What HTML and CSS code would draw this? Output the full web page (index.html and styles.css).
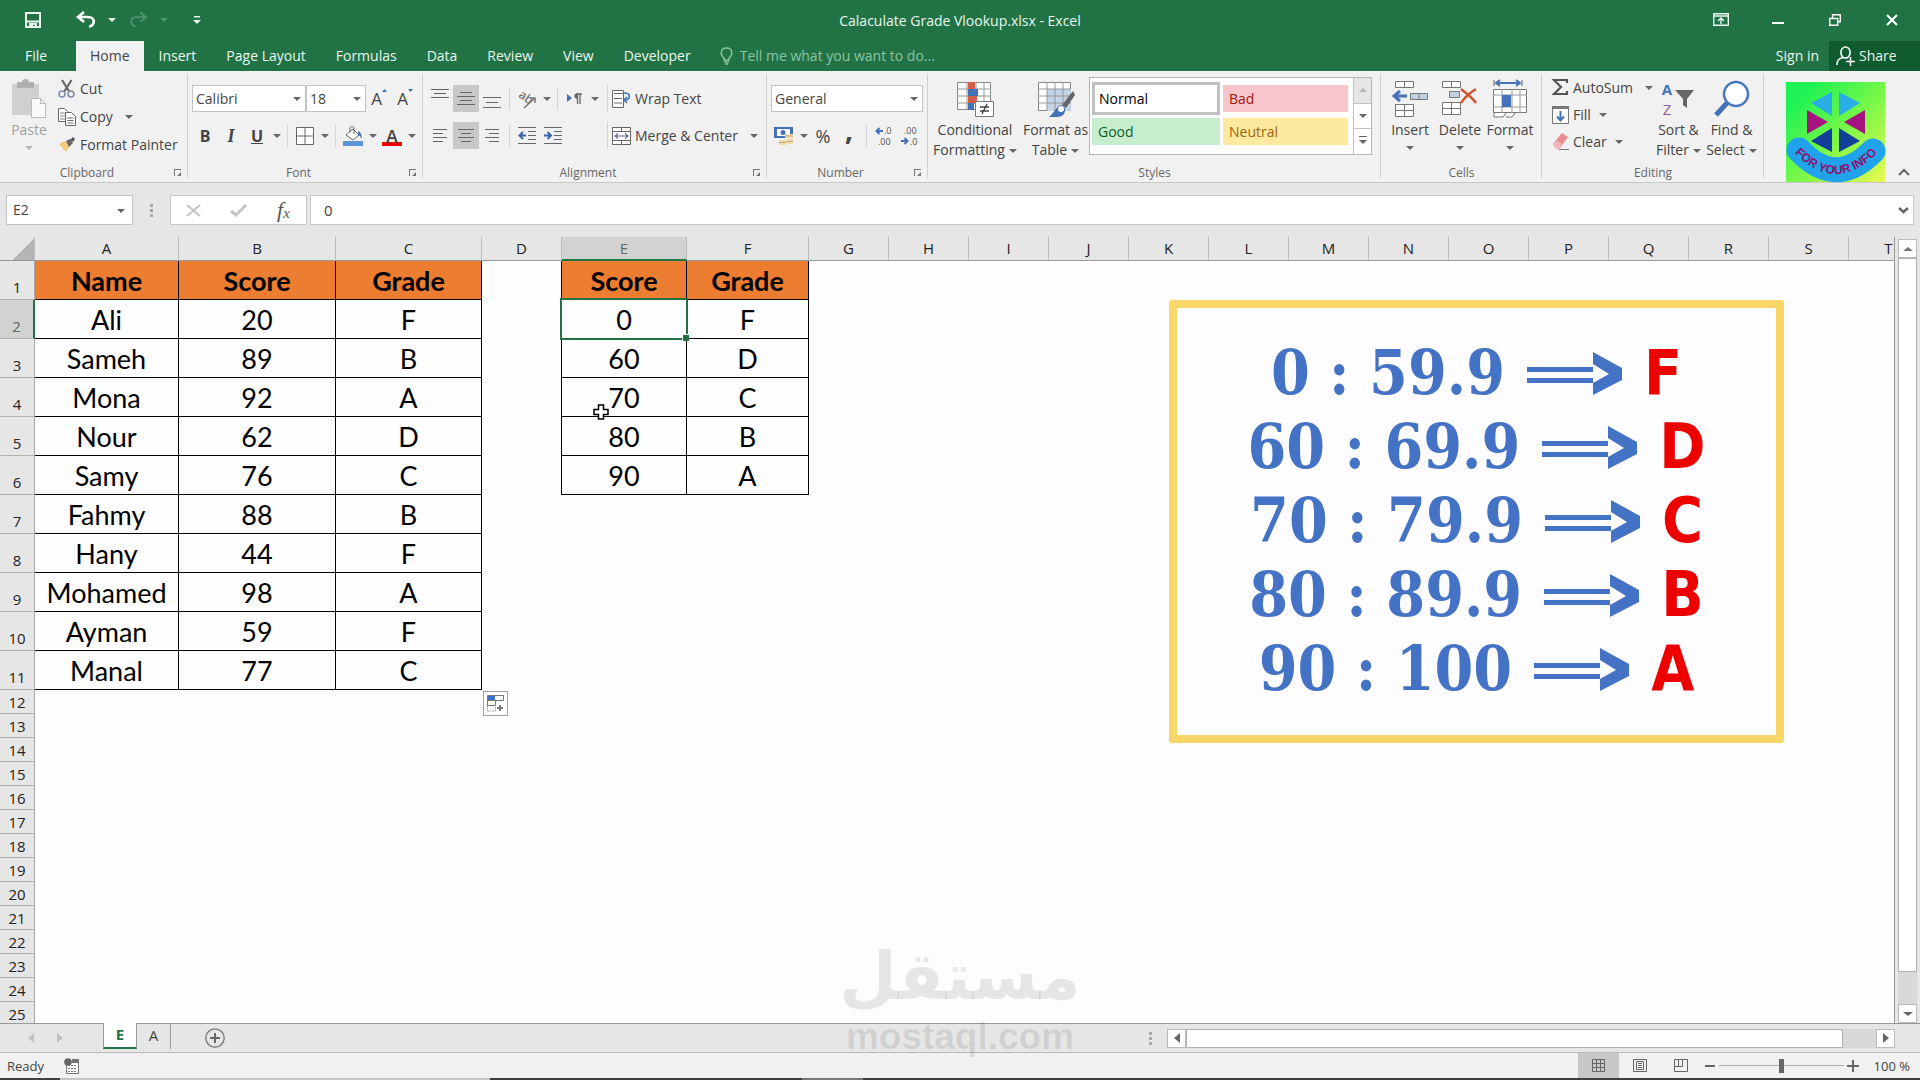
FILE: index.html
```html
<!DOCTYPE html>
<html lang="en">
<head>
    <meta charset="UTF-8">
    <meta name="viewport" content="width=device-width, initial-scale=1.0">
    <title>Calaculate Grade Vlookup.xlsx - Excel</title>
    <link rel="stylesheet" href="styles.css">
</head>
<body>
    <!-- Title bar -->
    <header class="title-bar">
        <div class="quick-access">
            <button class="qa-save" aria-label="Save"><svg width="16" height="16" viewBox="0 0 16 16"><path d="M1 1h14v14H1z M1 9.500h14" fill="none" stroke="#e9f7ee" stroke-width="2"/><path d="M4 11h8v5h-2v-3H8v3H4z" fill="#e9f7ee"/></svg></button>
            <button class="qa-undo" aria-label="Undo"><svg width="19" height="16" viewBox="0 0 19 16"><path d="M3 5h8c8 0 7 9 1 9.500" fill="none" stroke="#fff" stroke-width="2.600"/><path d="M7 0L1 5l6 5" fill="none" stroke="#fff" stroke-width="2.600"/></svg></button>
            <button class="qa-caret" aria-label="Undo list"><i class="caret light"></i></button>
            <button class="qa-undo" aria-label="Redo"><svg width="18" height="16" viewBox="0 0 19 16"><path d="M16 5H8C0 5 1 14 7 14.500M12 0l6 5-6 5" fill="none" stroke="#4f9470" stroke-width="2"/></svg></button>
            <button class="qa-caret" aria-label="Redo list"><i class="caret dim"></i></button>
            <button class="qa-more" aria-label="Customize Quick Access Toolbar"><svg width="8" height="8" viewBox="0 0 8 8"><path d="M1 0h6v1.500H1zM0 4h8L4 8z" fill="#e9f7ee"/></svg></button>
        </div>
        <h1>Calaculate Grade Vlookup.xlsx - Excel</h1>
        <div class="window-buttons">
            <button aria-label="Ribbon display options"><svg width="16" height="13" viewBox="0 0 16 13"><path d="M.7.7h14.600v11.600H.7zM1 3h14M8 11V5M5 8l3-3 3 3" fill="none" stroke="#e9f7ee" stroke-width="1.400"/></svg></button>
            <button aria-label="Minimize"><svg width="12" height="12" viewBox="0 0 12 12"><path d="M0 8h12v2H0z" fill="#fff"/></svg></button>
            <button aria-label="Restore"><svg width="12" height="12" viewBox="0 0 12 12"><path d="M.7 4.500h8v6.800h-8zM3.500 4V.7h7.800v7H9" fill="none" stroke="#fff" stroke-width="1.400"/></svg></button>
            <button aria-label="Close"><svg width="12" height="12" viewBox="0 0 12 12"><path d="M1 1l10 10M11 1L1 11" stroke="#fff" stroke-width="2"/></svg></button>
        </div>
    </header>

    <!-- Ribbon tabs -->
    <nav class="tabs">
        <button class="tab file">File</button>
        <button class="tab active">Home</button>
        <button class="tab">Insert</button>
        <button class="tab">Page Layout</button>
        <button class="tab">Formulas</button>
        <button class="tab">Data</button>
        <button class="tab">Review</button>
        <button class="tab">View</button>
        <button class="tab">Developer</button>
        <button class="tell-me"><svg width="13" height="18" viewBox="0 0 13 18"><path d="M4 13v-2C0 8 0 1 6.500 1S13 8 9 11v2zM4 15h5M5 17h3" fill="none" stroke="#8cc4a2" stroke-width="1.500"/></svg>Tell me what you want to do...</button>
        <button class="sign-in">Sign in</button>
        <button class="share"><svg width="20" height="20" viewBox="0 0 20 20"><path d="M1 19c0-5 3-7 6-7.500" fill="none" stroke="#fff" stroke-width="1.600"/><ellipse cx="9.500" cy="6.500" rx="4.600" ry="5.500" fill="none" stroke="#fff" stroke-width="1.600"/><path d="M10 15.500h9M14.500 11v9" stroke="#fff" stroke-width="1.500"/></svg>Share</button>
    </nav>

    <!-- Ribbon -->
    <section class="ribbon">
        <div class="group clipboard">
            <div class="group-body">
                <button class="big paste"><svg width="36" height="40" viewBox="0 0 36 40"><path d="M1 5h27v31H1z" fill="#d0d0d0"/><path d="M6 3h5c0-4 7-4 7 0h5v6H6z" fill="#b0b0b0"/><path d="M20.500 19.500h9l5 5v14h-14z" fill="#fafafa" stroke="#bbb"/><path d="M29.500 19.500v5h5" fill="none" stroke="#bbb"/></svg><span>Paste</span><i class="caret"></i></button>
                <div class="stack">
                    <button><svg width="18" height="18" viewBox="0 0 18 18"><path d="M4 0l7.500 12M13.500 0L6 12" stroke="#666" stroke-width="2.200"/><circle cx="4" cy="14" r="3" fill="none" stroke="#7d8ea5" stroke-width="1.500"/><circle cx="13" cy="14" r="3" fill="none" stroke="#7d8ea5" stroke-width="1.500"/></svg>Cut</button>
                    <button><svg width="18" height="18" viewBox="0 0 18 18"><path d="M.5.500h6l3 3v10h-9z" fill="#fff" stroke="#666"/><path d="M2 5h5M2 8h5M2 11h5" stroke="#888"/><path d="M7.500 4.500h6l4 4v9h-10z" fill="#fff" stroke="#666"/><path d="M9.500 10h6M9.500 12.500h6M9.500 15h6" stroke="#666"/></svg>Copy<i class="caret far"></i></button>
                    <button><svg width="18" height="16" viewBox="0 0 18 16"><path d="M1 7l6-3 5 5-4 6z" fill="#f2ca7b"/><path d="M8 4l4-2 3 4-4 4z" fill="#666"/><path d="M12 3l3-3 2 2-2 3z" fill="#555"/></svg>Format Painter</button>
                </div>
            </div>
            <div class="group-label"><span>Clipboard</span><button class="launcher" aria-label="Clipboard settings"></button></div>
        </div>

        <div class="group font">
            <div class="group-body rows">
                <div class="row">
                    <span class="select family"><select aria-label="Font"><option>Calibri</option></select></span>
                    <span class="select size"><select aria-label="Font size"><option>18</option></select></span>
                    <button class="icon-btn grow" aria-label="Increase font size">A<svg width="5" height="3" viewBox="0 0 5 3"><path d="M0 3l2.500-3L5 3z" fill="#4472b8"/></svg></button>
                    <button class="icon-btn grow" aria-label="Decrease font size">A<svg width="5" height="3" viewBox="0 0 5 3"><path d="M0 0h5L2.500 3z" fill="#4472b8"/></svg></button>
                </div>
                <div class="row">
                    <button class="icon-btn bold">B</button>
                    <button class="icon-btn italic">I</button>
                    <button class="icon-btn underline">U</button>
                    <button class="caret-btn" aria-label="Underline options"><i class="caret"></i></button>
                    <i class="sep"></i>
                    <button class="icon-btn" aria-label="Borders"><svg width="18" height="18" viewBox="0 0 18 18"><path d="M.5.500h17v17H.5zM9 1v16M1 9h16" fill="#fff" stroke="#666"/></svg></button>
                    <button class="caret-btn" aria-label="Border options"><i class="caret"></i></button>
                    <i class="sep"></i>
                    <button class="icon-btn" aria-label="Fill color"><svg width="20" height="20" viewBox="0 0 20 20"><path d="M0 15h20v5H0z" fill="#5b94d8"/><path d="M3 9l7-6 6 6-6 5z" fill="#fff" stroke="#666"/><path d="M7 6V2c0-2 4-2 4 0v6" fill="none" stroke="#666"/><path d="M15 5c3 1 4 4 3.500 8-1-2-1-3-3-4z" fill="#4472b8"/></svg></button>
                    <button class="caret-btn" aria-label="Fill color options"><i class="caret"></i></button>
                    <button class="icon-btn font-color" aria-label="Font color">A</button>
                    <button class="caret-btn" aria-label="Font color options"><i class="caret"></i></button>
                </div>
            </div>
            <div class="group-label"><span>Font</span><button class="launcher" aria-label="Font settings"></button></div>
        </div>

        <div class="group alignment">
            <div class="group-body">
                <div class="rows align-icons">
                    <div class="row">
                        <button class="icon-btn" aria-label="Top align"><svg class="up" width="18" height="9" viewBox="0 0 18 9"><path d="M0 .5h18M3 4.500h12M0 8.500h18" stroke="#666"/></svg></button>
                        <button class="icon-btn on" aria-label="Middle align"><svg width="18" height="13" viewBox="0 0 18 13"><path d="M3 .5h12M0 4.500h18M3 8.500h12M0 12.500h18" stroke="#666"/></svg></button>
                        <button class="icon-btn" aria-label="Bottom align"><svg class="down" width="18" height="11" viewBox="0 0 18 11"><path d="M0 .5h18M3 5.500h12M0 10.500h18" stroke="#666"/></svg></button>
                        <i class="sep"></i>
                        <button class="icon-btn" aria-label="Orientation"><svg width="20" height="20" viewBox="0 0 20 20"><text x="1" y="12" font-size="12" transform="rotate(35 8 10)">ab</text><path d="M7 19L18 9M13 9h5v5" fill="none" stroke="#777" stroke-width="1.500"/></svg></button>
                        <button class="caret-btn" aria-label="Orientation options"><i class="caret"></i></button>
                        <i class="sep"></i>
                        <button class="icon-btn" aria-label="Text direction"><svg width="16" height="12" viewBox="0 0 16 12"><path d="M0 1l5 4-5 4z" fill="#4472b8"/><path d="M15 1h-4.500v10M13 1v10" fill="none" stroke="#666" stroke-width="1.300"/><path d="M11 0c-5 0-5 6 0 6z" fill="#666"/></svg></button>
                        <button class="caret-btn" aria-label="Text direction options"><i class="caret"></i></button>
                    </div>
                    <div class="row">
                        <button class="icon-btn" aria-label="Align left"><svg width="14" height="13" viewBox="0 0 14 13"><path d="M0 .5h14M0 4.500h10M0 8.500h14M0 12.500h10" stroke="#666"/></svg></button>
                        <button class="icon-btn on" aria-label="Center"><svg width="16" height="13" viewBox="0 0 16 13"><path d="M0 .5h16M3 4.500h10M0 8.500h16M3 12.500h10" stroke="#666"/></svg></button>
                        <button class="icon-btn" aria-label="Align right"><svg width="14" height="13" viewBox="0 0 14 13"><path d="M0 .5h14M4 4.500h10M0 8.500h14M4 12.500h10" stroke="#666"/></svg></button>
                        <i class="sep"></i>
                        <button class="icon-btn" aria-label="Decrease indent"><svg width="18" height="17" viewBox="0 0 18 17"><path d="M0 .5h18M10 4.500h8M10 8.500h8M10 12.500h8M0 16.500h18" stroke="#666"/><path d="M8 8.500H2M5 5L1.500 8.500 5 12" fill="none" stroke="#3a62ad" stroke-width="2"/></svg></button>
                        <button class="icon-btn" aria-label="Increase indent"><svg width="18" height="17" viewBox="0 0 18 17"><path d="M0 .5h18M10 4.500h8M10 8.500h8M10 12.500h8M0 16.500h18" stroke="#666"/><path d="M0 8.500h6M3.500 5L7 8.500 3.500 12" fill="none" stroke="#3a62ad" stroke-width="2"/></svg></button>
                    </div>
                </div>
                <div class="rows align-text">
                    <div class="row"><button class="text-btn"><svg width="19" height="18" viewBox="0 0 19 18"><path d="M.5.500h11v17H.5zM12 3.500H2M2 8.500h8M2 13h8" fill="#fff" stroke="#666"/><path d="M11 3h3c5 1 4 7-1 7M15 7l-3 3 3 3" fill="none" stroke="#4472b8" stroke-width="1.600"/></svg>Wrap Text</button></div>
                    <div class="row"><button class="text-btn"><svg width="19" height="18" viewBox="0 0 19 18"><path d="M.5.500h18v17H.5zM.5 4.500h18M.5 13.500h18M9.500.500v4M9.500 13.500v4" fill="#fff" stroke="#666"/><path d="M3 9h13M6 6.500L3 9l3 2.500M13 6.500L16 9l-3 2.500" fill="none" stroke="#5f6f8a" stroke-width="1.200"/></svg>Merge &amp; Center<i class="caret far"></i></button></div>
                </div>
            </div>
            <div class="group-label"><span>Alignment</span><button class="launcher" aria-label="Alignment settings"></button></div>
        </div>

        <div class="group number">
            <div class="group-body rows">
                <div class="row"><span class="select format"><select aria-label="Number format"><option>General</option></select></span></div>
                <div class="row">
                    <button class="icon-btn" aria-label="Accounting format"><svg width="20" height="20" viewBox="0 0 20 20"><path d="M0 1h19v11H0z" fill="#4472b8"/><path d="M3 3h13v7H3z" fill="#fff"/><circle cx="9" cy="6.500" r="2.500" fill="#4472b8"/><path d="M11 8h8v4h-8zM5 14h7v5H5zM12 13h7v5h-7z" fill="#f0dba8"/><path d="M11 10h8M5 16.500h7M12 15.500h7" stroke="#c3ac78"/></svg></button>
                    <button class="caret-btn" aria-label="Accounting options"><i class="caret"></i></button>
                    <button class="icon-btn percent">%</button>
                    <button class="icon-btn comma">,</button>
                    <i class="sep"></i>
                    <button class="icon-btn" aria-label="Increase decimal"><svg width="18" height="24" viewBox="0 0 18 24"><path d="M8 7H2M4.500 4L1.500 7l3 3" fill="none" stroke="#4472b8" stroke-width="2"/><text x="9" y="10" font-size="9">.0</text><text x="3" y="21" font-size="9">.00</text></svg></button>
                    <button class="icon-btn" aria-label="Decrease decimal"><svg width="18" height="24" viewBox="0 0 18 24"><text x="3" y="10" font-size="9">.00</text><path d="M0 17h6M3.500 14l3 3-3 3" fill="none" stroke="#4472b8" stroke-width="2"/><text x="9" y="21" font-size="9">.0</text></svg></button>
                </div>
            </div>
            <div class="group-label"><span>Number</span><button class="launcher" aria-label="Number settings"></button></div>
        </div>

        <div class="group styles">
            <div class="group-body">
                <button class="big cond"><svg width="38" height="36" viewBox="0 0 38 36"><path d="M1.500 1.500h33v27h-33z" fill="#fff" stroke="#888"/><path d="M1 8h34M1 15h34M1 22h34M11 1v28M20 1v28M28 1v28" stroke="#999"/><path d="M12 1h7v7h-7zM12 15h9v7h-9z" fill="#d0604a"/><path d="M12 8h10v7H12zM12 22h6v7h-6z" fill="#4472b8"/><path d="M19.500 20.500h18v15h-18z" fill="#fff" stroke="#777"/><path d="M24 26h9M24 30h9M31 23l-5 10" stroke="#444" stroke-width="1.400"/></svg><span>Conditional</span><span>Formatting<i class="caret near"></i></span></button>
                <button class="big fmt-table"><svg width="38" height="36" viewBox="0 0 38 36"><path d="M1.500 1.500h32v28h-32z" fill="#fff" stroke="#888"/><path d="M10 8h24v22H10z" fill="#c3d3e8"/><path d="M1 8h33M1 15h33M1 22h33M10 1v29M18 1v29M26 1v29" stroke="#999"/><path d="M36 10L25 24l4 3 9-13z" fill="#666"/><path d="M25 24c-5 0-6 6-13 12h8c6 0 9-4 8-9z" fill="#4472b8"/><circle cx="24" cy="28" r="3" fill="#fff"/></svg><span>Format as</span><span>Table<i class="caret near"></i></span></button>
                <div class="gallery">
                    <div class="swatches">
                        <button class="normal">Normal</button>
                        <button class="bad">Bad</button>
                        <button class="good">Good</button>
                        <button class="neutral">Neutral</button>
                    </div>
                    <div class="gallery-nav">
                        <button class="off" aria-label="Previous styles"><i class="caret rise pale"></i></button>
                        <button aria-label="Next styles"><i class="caret"></i></button>
                        <button aria-label="More styles"><i class="caret bar"></i></button>
                    </div>
                </div>
            </div>
            <div class="group-label"><span>Styles</span></div>
        </div>

        <div class="group cells">
            <div class="group-body">
                <button class="big"><svg width="36" height="36" viewBox="0 0 36 36"><path d="M3.500.500h18v6h-18zM12.500.500v6M3.500 23.500h18v12h-18zM3.500 29.500h18M12.500 23.500v12" fill="#fff" stroke="#777"/><path d="M18.500 12.500h17v6h-17zM27 12.500v6" fill="#c3d0de" stroke="#777"/><path d="M15 15H3M8 10l-6 5 6 5" fill="none" stroke="#4472b8" stroke-width="3"/></svg><span>Insert</span><i class="caret"></i></button>
                <button class="big"><svg width="36" height="36" viewBox="0 0 36 36"><path d="M.5.500h18v6H.5zM9.500.500v6M.5 21.500h18v12H.5zM.5 27.500h18M9.500 21.500v12" fill="#fff" stroke="#777"/><path d="M7.500 10.500h10v6h-10z" fill="#c3d0de" stroke="#777"/><path d="M19 8c4 3 11 8 15 14M34 8c-5 3-11 8-15 14" fill="none" stroke="#d0522f" stroke-width="2.500"/></svg><span>Delete</span><i class="caret"></i></button>
                <button class="big"><svg width="36" height="38" viewBox="0 0 36 38"><path d="M2 0v6M30 0v6" stroke="#666"/><path d="M5 3h22M8 0L4 3l4 3M24 0l4 3-4 3" fill="none" stroke="#4472b8" stroke-width="2"/><path d="M1.500 9.500h33v23h-33z" fill="#fff" stroke="#777"/><path d="M1 15h34M1 27h34M10 9v24M20 9v24M28 9v24" stroke="#999"/><path d="M10 15h9v12h-9z" fill="#4472b8"/><path d="M2 33v4h9l3-4M14 37h6l3-4" fill="#fff" stroke="#777"/></svg><span>Format</span><i class="caret"></i></button>
            </div>
            <div class="group-label"><span>Cells</span></div>
        </div>

        <div class="group editing">
            <div class="group-body">
                <div class="stack">
                    <button><svg width="17" height="17" viewBox="0 0 17 17"><path d="M15 4V1H2l7 7-7 7h13v-3" fill="none" stroke="#555" stroke-width="2.200"/></svg>AutoSum<i class="caret far"></i></button>
                    <button><svg width="17" height="18" viewBox="0 0 17 18"><path d="M.5.500h16v17H.5z" fill="#fff" stroke="#777"/><path d="M0 0h17v3H0z" fill="#777"/><path d="M8.500 5v9M5 10.500l3.500 4 3.500-4" fill="none" stroke="#4472b8" stroke-width="2"/></svg>Fill<i class="caret near"></i></button>
                    <button><svg width="17" height="17" viewBox="0 0 17 17"><path d="M1 11L10 0l6 4-8 11H4z" fill="#e88b90"/><path d="M4 7l6 4-3 5H4l-3-4z" fill="#f4b6b8"/><path d="M7 16.500h10" stroke="#777"/></svg>Clear<i class="caret near"></i></button>
                </div>
                <button class="big find">
                    <span class="sort-icon"><span class="az"><b>A</b><b>Z</b></span><svg width="20" height="19" viewBox="0 0 20 19"><path d="M0 0h19l-7 9v9l-4-3V9z" fill="#666"/></svg></span>
                    <span>Sort &amp;</span><span>Filter<i class="caret near"></i></span>
                </button>
                <button class="big find"><svg width="36" height="36" viewBox="0 0 36 36"><path d="M13 22L2 34" stroke="#4472b8" stroke-width="5"/><circle cx="22" cy="13" r="12" fill="#fff" stroke="#4b78bd" stroke-width="2.500"/></svg><span>Find &amp;</span><span>Select<i class="caret near"></i></span></button>
            </div>
            <div class="group-label"><span>Editing</span></div>
        </div>

        <div class="brand">
            <svg width="99" height="100" viewBox="0 0 99 100" role="img" aria-label="For your info">
                <defs>
                    <linearGradient id="lime" x1="0" y1="0" x2="1" y2="1">
                        <stop offset="0.15" stop-color="#1ff254"/>
                        <stop offset="0.55" stop-color="#7cf848"/>
                        <stop offset="1" stop-color="#e9fa50"/>
                    </linearGradient>
                    <path id="arc" d="M5 67Q50 117 95 67"/>
                </defs>
                <path d="M0 0h99v100H0z" fill="url(#lime)"/>
                <path d="M46 10v24L25 21zM53 10v24l21-13z" fill="#29aee6"/>
                <path d="M21 28v24l21-12zM79 28v24L58 40z" fill="#a6127f"/>
                <path d="M46 46v24L25 59zM53 46v24l21-11z" fill="#123f99"/>
                <path d="M13 68Q50 107 87 69" fill="none" stroke="#1fa3ea" stroke-width="25" stroke-linecap="round"/>
                <text class="brand-text"><textPath href="#arc" startOffset="50%" text-anchor="middle">FOR YOUR INFO</textPath></text>
            </svg>
            <button class="collapse" aria-label="Collapse the ribbon"><svg width="12" height="8" viewBox="0 0 12 8"><path d="M1 7l5-5 5 5" fill="none" stroke="#666" stroke-width="2"/></svg></button>
        </div>
    </section>

    <!-- Formula bar -->
    <section class="formula-bar">
        <span class="select name-box"><input type="text" value="E2" aria-label="Name box"></span>
        <i class="dots"></i>
        <div class="formula-tools">
            <button aria-label="Cancel"><svg width="15" height="13" viewBox="0 0 15 13"><path d="M1 1l13 11M14 1L1 12" stroke="#c4c4c4" stroke-width="2"/></svg></button>
            <button aria-label="Enter"><svg width="17" height="13" viewBox="0 0 17 13"><path d="M1 7l5 4L16 1" fill="none" stroke="#c4c4c4" stroke-width="3"/></svg></button>
            <button class="fx" aria-label="Insert function">f<small>x</small></button>
        </div>
        <div class="formula-input">
            <input type="text" value="0" aria-label="Formula">
            <svg width="11" height="7" viewBox="0 0 11 7"><path d="M1 1l4.500 4L10 1" fill="none" stroke="#666" stroke-width="2.500"/></svg>
        </div>
    </section>

    <!-- Worksheet -->
    <main class="work-area">
        <div class="sheet">
            <table class="grid">
                <colgroup>
                    <col class="col-head"><col class="col-a"><col class="col-b"><col class="col-c"><col class="col-d"><col class="col-e"><col class="col-f">
                    <col span="14" class="col-std">
                </colgroup>
                <thead>
                    <tr><th class="corner"></th><th>A</th><th>B</th><th>C</th><th>D</th><th class="current">E</th><th>F</th><th>G</th><th>H</th><th>I</th><th>J</th><th>K</th><th>L</th><th>M</th><th>N</th><th>O</th><th>P</th><th>Q</th><th>R</th><th>S</th><th>T</th></tr>
                </thead>
                <tbody>
                    <tr class="tall title"><th>1</th><td>Name</td><td>Score</td><td>Grade</td><td class="gap"></td><td>Score</td><td>Grade</td></tr>
                    <tr class="tall"><th class="current">2</th><td>Ali</td><td>20</td><td>F</td><td class="gap"></td><td class="active-cell">0</td><td>F</td></tr>
                    <tr class="tall"><th>3</th><td>Sameh</td><td>89</td><td>B</td><td class="gap"></td><td>60</td><td>D</td></tr>
                    <tr class="tall"><th>4</th><td>Mona</td><td>92</td><td>A</td><td class="gap"></td><td>70</td><td>C</td></tr>
                    <tr class="tall"><th>5</th><td>Nour</td><td>62</td><td>D</td><td class="gap"></td><td>80</td><td>B</td></tr>
                    <tr class="tall"><th>6</th><td>Samy</td><td>76</td><td>C</td><td class="gap"></td><td>90</td><td>A</td></tr>
                    <tr class="tall"><th>7</th><td>Fahmy</td><td>88</td><td>B</td></tr>
                    <tr class="tall"><th>8</th><td>Hany</td><td>44</td><td>F</td></tr>
                    <tr class="tall"><th>9</th><td>Mohamed</td><td>98</td><td>A</td></tr>
                    <tr class="tall"><th>10</th><td>Ayman</td><td>59</td><td>F</td></tr>
                    <tr class="tall"><th>11</th><td>Manal</td><td>77</td><td>C</td></tr>
                    <tr><th>12</th></tr>
                    <tr><th>13</th></tr>
                    <tr><th>14</th></tr>
                    <tr><th>15</th></tr>
                    <tr><th>16</th></tr>
                    <tr><th>17</th></tr>
                    <tr><th>18</th></tr>
                    <tr><th>19</th></tr>
                    <tr><th>20</th></tr>
                    <tr><th>21</th></tr>
                    <tr><th>22</th></tr>
                    <tr><th>23</th></tr>
                    <tr><th>24</th></tr>
                    <tr><th>25</th></tr>
                </tbody>
            </table>

            <!-- objects floating over the cells -->
            <div class="grade-card">
                <p>0 : 59.9 <svg class="arrow" viewBox="0 0 95 43"><path d="M0 15h66v5H0zM0 26h66v5H0zM66 0l29 16v12L66 43V31l16-9-16-10z"/></svg> <b>F</b></p>
                <p>60 : 69.9 <svg class="arrow" viewBox="0 0 95 43"><path d="M0 15h66v5H0zM0 26h66v5H0zM66 0l29 16v12L66 43V31l16-9-16-10z"/></svg> <b>D</b></p>
                <p>70 : 79.9 <svg class="arrow" viewBox="0 0 95 43"><path d="M0 15h66v5H0zM0 26h66v5H0zM66 0l29 16v12L66 43V31l16-9-16-10z"/></svg> <b>C</b></p>
                <p>80 : 89.9 <svg class="arrow" viewBox="0 0 95 43"><path d="M0 15h66v5H0zM0 26h66v5H0zM66 0l29 16v12L66 43V31l16-9-16-10z"/></svg> <b>B</b></p>
                <p>90 : 100 <svg class="arrow" viewBox="0 0 95 43"><path d="M0 15h66v5H0zM0 26h66v5H0zM66 0l29 16v12L66 43V31l16-9-16-10z"/></svg> <b>A</b></p>
            </div>
            <button class="autofill" aria-label="Auto fill options"><svg width="17" height="17" viewBox="0 0 17 17"><path d="M.5.500h16v5H.5zM.5 5.500h8v5h-8z" fill="#fff" stroke="#777"/><path d="M1 1h7v4H1z" fill="#3a6fd0"/><path d="M.5 11v5h8v-5" fill="none" stroke="#888" stroke-dasharray="1 1"/><path d="M10 13h6M13 10v6" stroke="#777" stroke-width="2"/></svg></button>
            <svg class="cursor" width="16" height="16" viewBox="0 0 16 16"><path d="M5.500 1h5v4.500H15v5h-4.500V15h-5v-4.500H1v-5h4.500z" fill="#fff" stroke="#000" stroke-width="1.500"/></svg>
        </div>
        <div class="v-scroll">
            <button aria-label="Scroll up"><i class="caret rise"></i></button>
            <div class="thumb"></div>
            <div class="track"></div>
            <button aria-label="Scroll down"><i class="caret"></i></button>
        </div>
    </main>

    <!-- Sheet tabs and horizontal scroll -->
    <section class="sheet-bar">
        <div class="sheet-nav">
            <button aria-label="Previous sheet"><svg width="6" height="10" viewBox="0 0 6 10"><path d="M6 0v10L0 5z" fill="#c0c0c0"/></svg></button>
            <button aria-label="Next sheet"><svg width="6" height="10" viewBox="0 0 6 10"><path d="M0 0v10l6-5z" fill="#c0c0c0"/></svg></button>
        </div>
        <button class="sheet-tab selected">E</button>
        <button class="sheet-tab">A</button>
        <button class="add-sheet" aria-label="New sheet"><svg width="20" height="20" viewBox="0 0 20 20"><circle cx="10" cy="10" r="9.200" fill="none" stroke="#777" stroke-width="1.300"/><path d="M5 10h10M10 5v10" stroke="#666" stroke-width="2"/></svg></button>
        <i class="dots"></i>
        <div class="h-scroll">
            <button aria-label="Scroll left"><svg width="6" height="10" viewBox="0 0 6 10"><path d="M6 0v10L0 5z" fill="#666"/></svg></button>
            <div class="thumb"></div>
            <div class="track"></div>
            <button aria-label="Scroll right"><svg width="6" height="10" viewBox="0 0 6 10"><path d="M0 0v10l6-5z" fill="#666"/></svg></button>
        </div>
    </section>

    <!-- Status bar -->
    <footer class="status-bar">
        <span class="ready">Ready</span>
        <button class="macro" aria-label="Record macro"><svg width="16" height="16" viewBox="0 0 16 16"><path d="M2.500 3.500h12v12h-12z" fill="#fff" stroke="#777"/><path d="M8 1h7v4H8z" fill="#777"/><circle cx="4" cy="4" r="3.800" fill="#666"/><path d="M4 7.500h9M4 10.500h9M4 13.500h9" stroke="#777" stroke-dasharray="2 1"/></svg></button>
        <button class="view on" aria-label="Normal view"><svg width="13" height="13" viewBox="0 0 13 13"><path d="M.5.500h12v12H.5zM.5 4.500h12M.5 8.500h12M4.500.500v12M8.500.500v12" fill="none" stroke="#666"/></svg></button>
        <button class="view" aria-label="Page layout view"><svg width="14" height="13" viewBox="0 0 14 13"><path d="M.5.500h13v12H.5zM3.500 2.500h7v8h-7zM5 4.500h4M5 6.500h4M5 8.500h4" fill="none" stroke="#666"/></svg></button>
        <button class="view" aria-label="Page break view"><svg width="14" height="13" viewBox="0 0 14 13"><path d="M.5.500h13v12H.5zM.5 7.500h8v-7M4.500.500v7" fill="none" stroke="#666"/></svg></button>
        <button class="zoom-btn" aria-label="Zoom out"><svg width="10" height="10" viewBox="0 0 10 10"><path d="M0 5h10" stroke="#666" stroke-width="2"/></svg></button>
        <input class="zoom" type="range" min="0" max="100" value="50" aria-label="Zoom">
        <button class="zoom-btn" aria-label="Zoom in"><svg width="12" height="12" viewBox="0 0 12 12"><path d="M0 6h12M6 0v12" stroke="#666" stroke-width="2"/></svg></button>
        <span class="percentage">100 %</span>
    </footer>
    <div class="taskbar"></div>

    <div class="watermark">
        <span class="wm-arabic" lang="ar" dir="rtl">مستقل</span>
        <span class="wm-latin">mostaql.com</span>
    </div>
</body>
</html>
```

FILE: styles.css
```css
* {
    box-sizing: border-box;
}
body {
    margin: 0;
    height: 100vh;
    display: flex;
    flex-direction: column;
    overflow: hidden;
    background: #e6e6e6;
    color: #444;
    font-family: "Open Sans", "Noto Sans", sans-serif;
    font-size: 14px;
    line-height: 20px;
}
button, input, select {
    margin: 0;
    padding: 0;
    border: 0;
    background: none;
    color: inherit;
    font: inherit;
    white-space: nowrap;
}
svg {
    display: block;
    flex: none;
    overflow: visible;
}
svg text {
    fill: #555;
}

/* little triangle used by every drop-down */
.caret {
    display: inline-block;
    flex: none;
    width: 0;
    height: 0;
    border: 4px solid transparent;
    border-top-color: #666;
    border-bottom: 0;
}
.caret.light {
    border-top-color: #e9f7ee;
}
.caret.dim {
    border-top-color: #4f9470;
}
.caret.rise {
    border-top: 0;
    border-bottom: 4px solid #777;
}
.caret.pale {
    border-bottom-color: #b5b5b5;
}
.caret.near {
    margin-left: 4px;
    vertical-align: middle;
}
.caret.far {
    margin-left: 8px;
}
.caret.bar {
    position: relative;
}
.caret.bar::before {
    content: "";
    position: absolute;
    top: -8px;
    left: -4px;
    width: 8px;
    height: 1px;
    background: #666;
}

/* title bar */
.title-bar {
    display: grid;
    grid-template-columns: 1fr auto 1fr;
    flex: none;
    height: 41px;
    background: #217346;
    color: #e9f7ee;
}
.title-bar h1 {
    margin: 0;
    align-self: center;
    font-size: 14px;
    font-weight: 400;
}
.quick-access, .window-buttons {
    display: flex;
    height: 39px;
}
.quick-access {
    padding-left: 13px;
}
.quick-access button, .window-buttons button {
    display: flex;
    align-items: center;
    justify-content: center;
}
.quick-access .qa-save {
    width: 40px;
    margin-right: 18px;
}
.quick-access .qa-undo {
    width: 30px;
}
.quick-access .qa-caret {
    width: 22px;
}
.quick-access .qa-more {
    width: 44px;
}
.window-buttons {
    justify-content: flex-end;
}
.window-buttons button {
    width: 57px;
}

/* tabs */
.tabs {
    display: flex;
    flex: none;
    height: 30px;
    background: #217346;
    color: #e9f7ee;
}
.tab {
    padding: 0 15px;
}
.tab.file {
    width: 76px;
    padding: 0 4px 0 0;
}
.tab.active {
    padding: 0 14px;
    background: #f1f1f1;
    color: #444;
}
.tell-me {
    display: flex;
    align-items: center;
    gap: 7px;
    margin-left: 14px;
    color: #8cc4a2;
}
.sign-in {
    margin-left: auto;
    padding: 0 10px;
}
.share {
    display: flex;
    align-items: center;
    gap: 3px;
    width: 91px;
    padding-left: 7px;
    background: #0f5b2f;
}

/* ribbon */
.ribbon {
    display: flex;
    flex: none;
    height: 112px;
    background: #f1f1f1;
    border-bottom: 1px solid #c8c8c8;
}
.group {
    position: relative;
    display: flex;
    flex-direction: column;
    flex: none;
}
.group::after {
    content: "";
    position: absolute;
    top: 3px;
    right: 0;
    bottom: 4px;
    width: 1px;
    background: #d0d0d0;
}
.clipboard { width: 188px; }
.font { width: 235px; }
.alignment { width: 344px; }
.number { width: 161px; }
.styles { width: 453px; }
.cells { width: 161px; }
.editing { width: 222px; }
.group-body {
    display: flex;
    height: 92px;
}
.group-label {
    display: flex;
    height: 19px;
    align-items: center;
    font-size: 12px;
    color: #666;
}
.group-label span {
    flex: 1;
    text-align: center;
}
.launcher {
    position: relative;
    width: 7px;
    height: 7px;
    margin-right: 7px;
    border-top: 1px solid #777;
    border-left: 1px solid #777;
}
.launcher::after {
    content: "";
    position: absolute;
    right: 0;
    bottom: 0;
    border: 2px solid #777;
    border-top-color: transparent;
    border-left-color: transparent;
}
.rows {
    display: flex;
    flex-direction: column;
    gap: 10px;
    padding: 14px 4px 0;
}
.row {
    display: flex;
    align-items: center;
    height: 27px;
}
.icon-btn, .caret-btn {
    display: flex;
    align-items: center;
    justify-content: center;
    width: 26px;
    height: 27px;
}
.caret-btn {
    width: 13px;
}
.icon-btn.on {
    background: #c8c8c8;
}
.icon-btn .up {
    margin-bottom: 10px;
}
.icon-btn .down {
    margin-top: 8px;
}
.grow {
    font-size: 17px;
    line-height: 24px;
}
.grow svg {
    margin-bottom: 16px;
}
.font-color {
    height: 21px;
    font-size: 18px;
    font-weight: 600;
    line-height: 18px;
    background: linear-gradient(#f00000, #f00000) bottom / 20px 4px no-repeat;
}
.sep {
    flex: none;
    width: 1px;
    height: 22px;
    margin: 0 4px;
    background: #d4d4d4;
}
.bold, .italic, .underline {
    font-size: 16px;
    font-weight: 700;
}
.italic {
    font-family: "Liberation Serif", serif;
    font-size: 18px;
    font-style: italic;
}
.underline {
    text-decoration: underline;
}
.percent {
    font-size: 18px;
}
.comma {
    padding-bottom: 14px;
    font-size: 28px;
    font-weight: 700;
}
.select {
    position: relative;
    display: flex;
    height: 27px;
    border: 1px solid #c3c3c3;
    background: #fff;
}
.select::after {
    content: "";
    position: absolute;
    top: 11px;
    right: 4px;
    border: 4px solid transparent;
    border-top-color: #666;
    border-bottom: 0;
    pointer-events: none;
}
.select select, .select input {
    width: 100%;
    padding-left: 3px;
    appearance: none;
    outline: none;
}
.family { width: 114px; }
.size { width: 60px; }
.format { width: 152px; }
.align-icons {
    width: 182px;
    padding-right: 0;
}
.align-text .row {
    padding-left: 4px;
    border-left: 1px solid #d4d4d4;
}
.align-text {
    padding-left: 2px;
}
.text-btn, .stack button {
    display: flex;
    align-items: center;
    gap: 4px;
}
.stack {
    display: flex;
    flex-direction: column;
    padding-top: 4px;
}
.stack button {
    height: 28px;
}
.editing .stack {
    width: 110px;
    padding: 3px 0 0 10px;
}
.editing .stack button {
    height: 27px;
}
.big {
    display: flex;
    flex-direction: column;
    align-items: center;
    padding-top: 8px;
}
.big > svg {
    height: 40px;
    margin-bottom: 1px;
}
.big .caret:not(.near) {
    margin-top: 6px;
}
.paste {
    width: 58px;
    color: #a0a0a0;
}
.paste .caret {
    border-top-color: #b5b5b5;
}
.cond { width: 94px; }
.fmt-table { width: 67px; }
.cells .group-body {
    padding-left: 4px;
}
.cells .big {
    width: 50px;
}
.find {
    width: 53px;
}
.sort-icon {
    display: flex;
    align-items: center;
    gap: 3px;
    height: 40px;
    margin-bottom: 1px;
}
.az {
    display: flex;
    flex-direction: column;
    font-size: 15px;
    line-height: 20px;
}
.az b {
    color: #4472b8;
}
.az b:last-child {
    color: #8a5ca5;
    font-weight: 400;
}
.gallery {
    display: flex;
    width: 283px;
    height: 78px;
    margin-top: 6px;
    border: 1px solid #b5b5b5;
    background: #fff;
}
.swatches {
    display: grid;
    grid-template-columns: 128px 125px;
    grid-template-rows: 33px 27px;
    align-content: start;
    gap: 3px;
    padding: 4px 5px 0 2px;
}
.swatches button {
    padding-left: 6px;
    text-align: left;
}
.swatches .normal {
    padding-left: 4px;
    border: 3px solid #c0c0c0;
    color: #000;
}
.swatches .bad {
    margin: 3px 0;
    background: #f8c5cd;
    color: #9c1a10;
}
.swatches .good {
    background: #c6edce;
    color: #0d6123;
}
.swatches .neutral {
    background: #feea9e;
    color: #9c6410;
}
.gallery-nav {
    display: flex;
    flex: 1;
    flex-direction: column;
    border-left: 1px solid #c3c3c3;
}
.gallery-nav button {
    display: flex;
    flex: 1;
    align-items: center;
    justify-content: center;
    border-bottom: 1px solid #c3c3c3;
}
.gallery-nav .off {
    background: #e6e6e6;
}
.gallery-nav button:last-child {
    border-bottom: 0;
}
.brand {
    display: flex;
    flex: 1;
    align-items: flex-end;
    padding-left: 22px;
}
.brand-text {
    fill: #8f0f6e;
    font-family: "Liberation Sans", sans-serif;
    font-size: 12px;
    font-weight: 700;
}
.collapse {
    margin: 0 auto;
    padding: 0 0 6px 2px;
}

/* formula bar */
.formula-bar {
    display: flex;
    flex: none;
    align-items: center;
    height: 54px;
    padding: 0 6px;
}
.name-box {
    width: 127px;
    height: 30px;
}
.name-box::after {
    top: 13px;
    right: 7px;
}
.name-box input {
    padding-left: 6px;
}
.dots {
    flex: none;
    width: 3px;
    height: 13px;
    background: repeating-linear-gradient(#a8a8a8 0 3px, transparent 3px 5px);
}
.formula-bar .dots {
    margin: 0 17px;
}
.formula-tools {
    display: flex;
    width: 137px;
    height: 30px;
    border: 1px solid #c8c8c8;
    background: #fff;
}
.formula-tools button {
    display: flex;
    flex: 1;
    align-items: center;
    justify-content: center;
}
.fx {
    font-family: "Liberation Serif", serif;
    font-size: 22px;
    font-style: italic;
    color: #555;
}
.fx small {
    padding-top: 5px;
    font-size: 15px;
}
.formula-input {
    display: flex;
    flex: 1;
    align-items: center;
    height: 30px;
    margin-left: 3px;
    padding: 0 4px 0 13px;
    border: 1px solid #c8c8c8;
    background: #fff;
}
.formula-input input {
    flex: 1;
    font-size: 15px;
    outline: none;
}

/* worksheet */
.work-area {
    display: flex;
    flex: 1;
    min-height: 0;
}
.sheet {
    position: relative;
    flex: 1;
    min-width: 0;
    overflow: hidden;
    border-right: 1px solid #999;
    background: linear-gradient(#e6e6e6 24px, #fdfdfd 24px);
}
.grid {
    width: 1929px;
    table-layout: fixed;
    border-collapse: separate;
    border-spacing: 0;
}
.col-head { width: 35px; }
.col-a { width: 144px; }
.col-b { width: 157px; }
.col-c { width: 146px; }
.col-d { width: 80px; }
.col-e { width: 125px; }
.col-f { width: 122px; }
.col-std { width: 80px; }
.grid th, .grid td {
    padding: 0;
}
.grid tr {
    height: 24px;
}
.grid th {
    border-right: 1px solid #a8a8a8;
    border-bottom: 1px solid #b0b0b0;
    background: #e6e6e6;
    color: #222;
    font-size: 15px;
    font-weight: 400;
    line-height: 20px;
}
.grid thead th {
    padding-bottom: 1px;
    border-right-color: #bcbcbc;
    border-bottom-color: #999;
}
.grid .corner {
    background: linear-gradient(135deg, #e6e6e6 62%, #b5b5b5 62%);
}
.grid th.current {
    background: #d2d2d2;
    color: #5a6b60;
}
.grid thead .current {
    padding-bottom: 0;
    border-bottom: 2px solid #217346;
}
.grid tbody .current {
    border-right: 2px solid #217346;
}
.grid .tall {
    height: 39px;
}
.grid .tall th {
    padding-bottom: 2px;
    vertical-align: bottom;
}
.grid td {
    padding-top: 2px;
    border-right: 1px solid #000;
    border-bottom: 1px solid #000;
    color: #000;
    font-family: Lato, "Open Sans", sans-serif;
    font-size: 27px;
    line-height: 30px;
    text-align: center;
}
.grid .gap {
    border-bottom: 0;
}
.grid .title td {
    font-weight: 700;
}
.grid .title td:not(.gap) {
    background: #ed7d31;
}
.grid .active-cell {
    position: relative;
}
.active-cell::before {
    content: "";
    position: absolute;
    inset: -2px;
    border: 2px solid #217346;
}
.active-cell::after {
    content: "";
    position: absolute;
    right: -3px;
    bottom: -3px;
    width: 6px;
    height: 6px;
    border: 1px solid #fff;
    border-right: 0;
    border-bottom: 0;
    background: #217346;
}

/* floating objects */
.grade-card {
    position: absolute;
    top: 63px;
    left: 1169px;
    width: 615px;
    height: 443px;
    padding-top: 28px;
    border: 8px solid #f8d768;
    border-radius: 3px;
    background: #fdfdff;
    color: #4472c4;
    font-family: "DejaVu Serif Condensed", "DejaVu Serif", serif;
    font-size: 62px;
    font-weight: 700;
    line-height: 74px;
}
.grade-card p {
    display: flex;
    align-items: center;
    justify-content: center;
    gap: 22px;
    margin: 0;
}
.grade-card b {
    color: #ed0000;
    font-family: "DejaVu Sans Condensed", "DejaVu Sans", sans-serif;
}
.arrow {
    width: 95px;
    height: 43px;
    fill: #4472c4;
}
.autofill {
    position: absolute;
    top: 454px;
    left: 483px;
    padding: 3px;
    border: 1px solid #a0a0a0;
    background: #fff;
}
.cursor {
    position: absolute;
    top: 167px;
    left: 593px;
}

/* scroll bars */
.v-scroll {
    display: flex;
    flex-direction: column;
    width: 25px;
    padding: 2px 3px 0;
}
.v-scroll button, .h-scroll button {
    display: flex;
    flex: none;
    align-items: center;
    justify-content: center;
    width: 19px;
    height: 19px;
    border: 1px solid #bbb;
    background: #fff;
}
.v-scroll .caret {
    border-left-width: 5px;
    border-right-width: 5px;
}
.thumb {
    border: 1px solid #b0b0b0;
    background: #fff;
}
.track {
    background: #d8d8d8;
}
.v-scroll .thumb {
    flex: 1;
}
.v-scroll .track {
    height: 32px;
}
.h-scroll {
    display: flex;
    width: 728px;
    height: 19px;
}
.h-scroll .thumb {
    flex: 1;
}
.h-scroll .track {
    width: 33px;
}

/* sheet tabs */
.sheet-bar {
    display: flex;
    flex: none;
    align-items: center;
    height: 30px;
    padding-right: 25px;
    border-top: 1px solid #999;
    border-bottom: 1px solid #b8b8b8;
}
.sheet-nav {
    display: flex;
    gap: 23px;
    width: 103px;
    padding-left: 28px;
}
.sheet-tab {
    align-self: flex-start;
    width: 34px;
    height: 25px;
    padding-bottom: 3px;
    font-size: 15px;
    border-right: 1px solid #999;
}
.sheet-tab.selected {
    height: 26px;
    margin-top: -1px;
    border-left: 1px solid #999;
    border-bottom: 2px solid #217346;
    background: #fff;
    color: #217346;
    font-weight: 700;
}
.add-sheet {
    margin-left: 34px;
}
.sheet-bar .dots {
    margin: 0 15px 0 auto;
}

/* status bar */
.status-bar {
    display: flex;
    flex: none;
    align-items: center;
    height: 25px;
    background: #f1f1f1;
    font-size: 13px;
}
.ready {
    margin: 0 20px 0 7px;
}
.macro {
    margin-right: auto;
}
.view {
    display: flex;
    align-items: center;
    justify-content: center;
    width: 41px;
    height: 25px;
}
.view.on {
    background: #c8c8c8;
}
.zoom-btn {
    display: flex;
    align-items: center;
    justify-content: center;
    width: 18px;
}
.zoom {
    width: 125px;
    height: 14px;
    appearance: none;
    background: linear-gradient(#aaa, #aaa) center / 100% 1px no-repeat;
}
.zoom::-webkit-slider-thumb {
    appearance: none;
    width: 5px;
    height: 14px;
    background: #666;
}
.percentage {
    width: 58px;
    padding-right: 10px;
    text-align: right;
}
.taskbar {
    flex: none;
    height: 2px;
    background: linear-gradient(to right, #404040 60px, #c6c6c6 60px 490px, #404040 490px 802px, #777 802px 863px, #404040 863px);
}

/* watermark */
.watermark {
    position: absolute;
    right: 0;
    bottom: 23px;
    left: 0;
    display: flex;
    flex-direction: column;
    align-items: center;
    color: rgba(0, 0, 0, 0.09);
    font-weight: 700;
    pointer-events: none;
}
.wm-arabic {
    font-family: "DejaVu Sans", sans-serif;
    font-size: 66px;
    line-height: 80px;
}
.wm-latin {
    font-family: "Liberation Sans", sans-serif;
    font-size: 37px;
    line-height: 40px;
}
```
